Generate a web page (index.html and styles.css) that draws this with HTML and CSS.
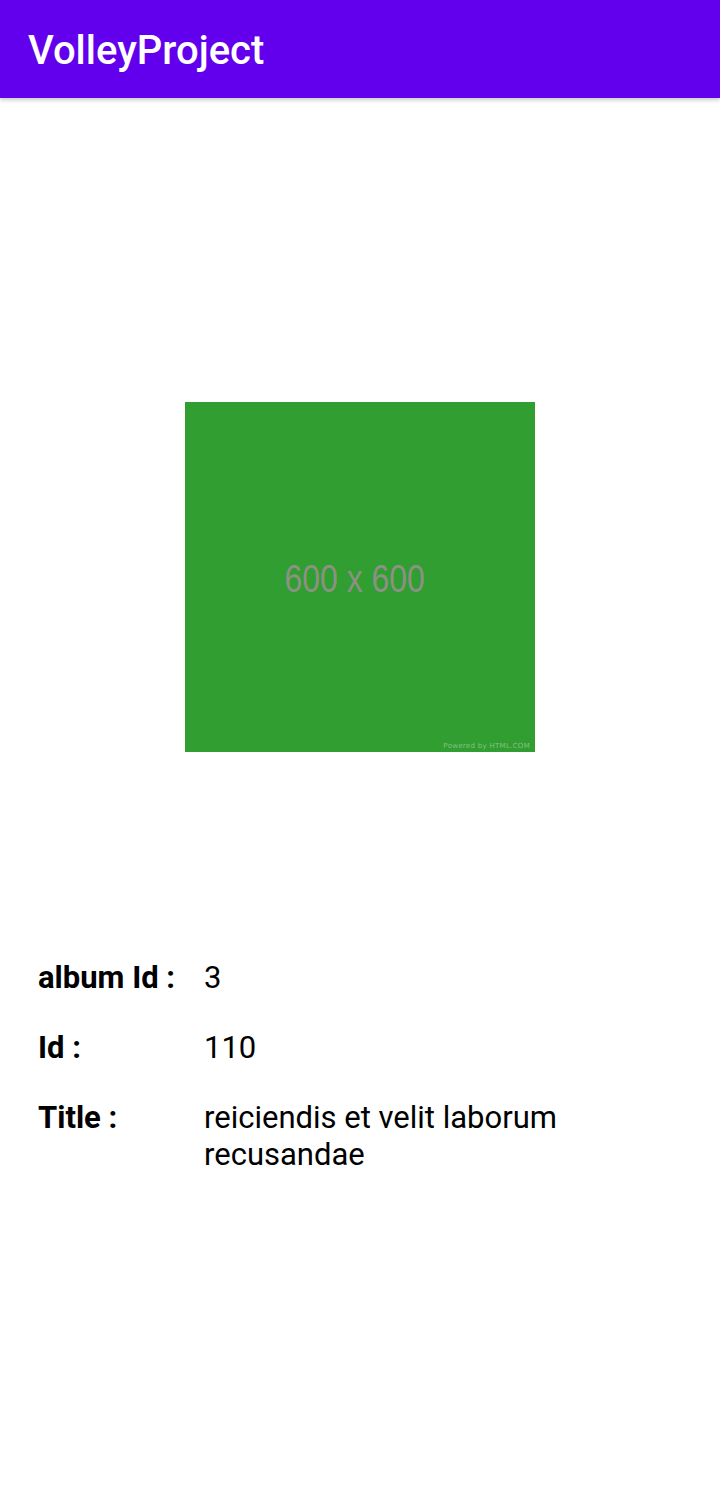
FILE: index.html
```html
<!DOCTYPE html>
<html>
<head>
<meta charset="utf-8">
<link rel="stylesheet" href="styles.css">
</head>
<body>
<header class="toolbar"><h1 class="toolbar-title">VolleyProject</h1></header>
<main class="content">
  <div class="image-wrap">
    <div class="placeholder">
      <span class="placeholder-text">600 x 600</span>
      <span class="powered">Powered by HTML.COM</span>
    </div>
  </div>
  <div class="details">
    <div class="row"><span class="label">album Id :</span><span class="value">3</span></div>
    <div class="row"><span class="label">Id :</span><span class="value">110</span></div>
    <div class="row"><span class="label">Title :</span><span class="value">reiciendis et velit laborum recusandae</span></div>
  </div>
</main>
</body>
</html>
```

FILE: styles.css
```css
html, body {
  margin: 0;
  padding: 0;
  background: #ffffff;
  font-family: Roboto, "Noto Sans", sans-serif;
}
.toolbar {
  height: 98px;
  background: #6200ee;
  box-shadow: 0 2px 4px rgba(0,0,0,0.22);
  display: flex;
  align-items: center;
  padding-left: 28px;
  position: relative;
  z-index: 1;
}
.toolbar-title {
  margin: 0;
  color: #ffffff;
  font-weight: 500;
  font-size: 40px;
  line-height: 47px;
  margin-top: 2px;
}
.content {
  display: flex;
  flex-direction: column;
}
.image-wrap {
  display: flex;
  justify-content: center;
  padding-top: 304px;
}
.placeholder {
  width: 350px;
  height: 350px;
  background: #309e31;
  position: relative;
  display: flex;
  justify-content: center;
  align-items: center;
}
.placeholder-text {
  font-family: "Liberation Sans", Arial, sans-serif;
  color: #8c9184;
  font-size: 39px;
  line-height: 45px;
  transform: scaleX(0.82);
  margin-left: -10px;
  margin-top: 2px;
}
.powered {
  position: absolute;
  right: 5px;
  bottom: 2px;
  font-family: "DejaVu Sans", sans-serif;
  font-size: 7px;
  color: #86c083;
  letter-spacing: 0.3px;
}
.details {
  display: flex;
  flex-direction: column;
  gap: 33px;
  padding: 207px 38px 0 38px;
}
.row {
  display: flex;
  font-size: 31px;
  line-height: 37px;
  color: #000000;
}
.label {
  font-weight: 700;
  width: 166px;
  flex-shrink: 0;
}
.value {
  width: 370px;
}
```
